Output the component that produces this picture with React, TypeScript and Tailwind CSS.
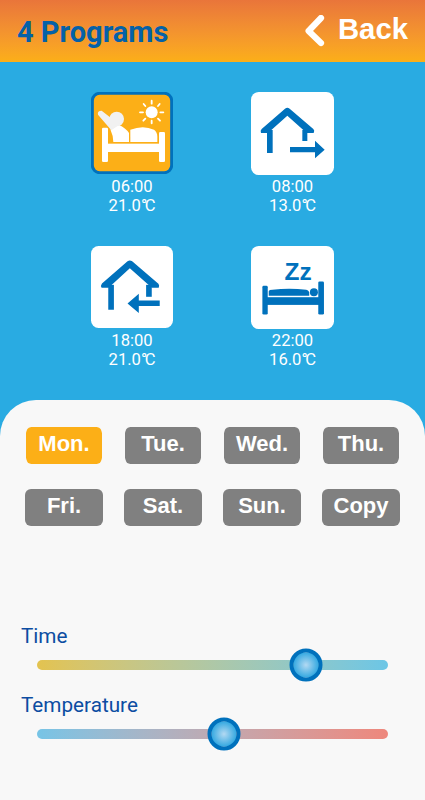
import React from 'react';
import clsx from 'clsx';

const MorningIcon = () => (
  <svg viewBox="33 36 246 246" className="w-[82px] h-[82px]">
    <rect x="37" y="40" width="238" height="238" rx="22" fill="#fcaf17" stroke="#0071bc" strokeWidth="9" />
    <g fill="#fff">
      <rect x="66" y="143" width="18" height="103" rx="4" />
      <rect x="237" y="156" width="18" height="90" rx="4" />
      <rect x="76" y="191" width="170" height="25" />
      <path d="M92 138L118 135Q138 145 147 159V186H100Q99 165 92 151Z" />
      <path d="M151 186V149Q190 134 222 149Q232 156 232 170V186Z" />
    </g>
    <g fill="#f1f1f1">
      <circle cx="110" cy="117" r="22" />
      <path d="M54 104Q51 92 65 92L93 114L120 133L94 151Z" />
    </g>
    <circle cx="215" cy="97" r="18" fill="#fff" />
    <path
      d="M215 62V71M215 122V130M180 97H189M241 97H250M191 72L196 78M234 116L240 122M239 72L234 78M196 116L190 122"
      stroke="#fff"
      strokeWidth="5.5"
      strokeLinecap="round"
    />
  </svg>
);

const LeaveIcon = () => (
  <svg viewBox="33 36 249 249" className="w-[83px] h-[83px]">
    <rect x="33" y="36" width="249" height="249" rx="23" fill="#fff" />
    <g fill="#0071bc">
      <path d="M135 86Q142 80 149 86L220 147Q225 152 221 159H200L142 107L84 159H63Q60 152 65 147Z" />
      <rect x="81" y="150" width="17" height="69" />
      <rect x="187" y="150" width="15" height="33" />
      <path d="M150 201H225V182L254 209L225 235V217H150Z" />
    </g>
  </svg>
);

const ReturnIcon = () => (
  <svg viewBox="33 33 247 247" className="w-[82px] h-[82px]">
    <rect x="33" y="33" width="247" height="247" rx="23" fill="#fff" />
    <g fill="#0071bc">
      <path d="M143 79Q150 74 157 79L236 147Q240 152 237 159H216L150 100L86 159H65Q61 152 66 146Z" />
      <rect x="85" y="150" width="17" height="75" />
      <rect x="199" y="150" width="17" height="36" />
      <path d="M240 197H177V177L143 206L177 235V214H240Z" />
    </g>
  </svg>
);

const SleepIcon = () => (
  <svg viewBox="34 33 248 248" className="w-[83px] h-[83px]">
    <rect x="34" y="33" width="248" height="248" rx="23" fill="#fff" />
    <g fill="#0071bc">
      <rect x="68" y="152" width="16" height="86" rx="4" />
      <rect x="235" y="139" width="17" height="99" rx="4" />
      <rect x="78" y="186" width="164" height="23" />
      <path d="M87 168Q88 164 98 164Q148 157 199 164Q208 166 208 174V182H87Z" />
      <circle cx="222" cy="171" r="12" />
    </g>
    <text x="134" y="136" fontFamily="Liberation Sans, sans-serif" fontWeight="700" fontSize="73" fill="#0071bc">
      Zz
    </text>
  </svg>
);

const programs = [
  { time: '06:00', temp: '21.0', icon: <MorningIcon /> },
  { time: '08:00', temp: '13.0', icon: <LeaveIcon /> },
  { time: '18:00', temp: '21.0', icon: <ReturnIcon /> },
  { time: '22:00', temp: '16.0', icon: <SleepIcon /> },
];

const weekRows = [
  ['Mon.', 'Tue.', 'Wed.', 'Thu.'],
  ['Fri.', 'Sat.', 'Sun.', 'Copy'],
];

interface SliderProps {
  label: string;
  value: number;
  trackClass: string;
}

function Slider({ label, value, trackClass }: SliderProps) {
  return (
    <div className="h-[69px]">
      <div className="pl-[21px] text-[20.7px] leading-[26px] text-[#0c4da2]">{label}</div>
      <div className={clsx('relative ml-[37px] mt-[11px] h-[10px] w-[351px] rounded-full', trackClass)}>
        <div
          className="absolute top-1/2 h-[33px] w-[33px] -translate-x-1/2 -translate-y-1/2 rounded-full border-4 border-[#0071bc] bg-[radial-gradient(circle_closest-side,#b3d9f2_0%,#35a9e1_100%)]"
          style={{ left: `${value}%` }}
        />
      </div>
    </div>
  );
}

export default function App() {
  return (
    <div className="flex h-[800px] w-[425px] flex-col overflow-hidden bg-[#29abe2] font-[Roboto,sans-serif]">
      <header className="flex h-[62px] shrink-0 justify-between bg-linear-to-b from-[#e9753a] to-[#fcaf17] pl-[17px] pr-[17px]">
        <h1 className="pt-[15px] text-[29px] leading-[34px] font-bold text-[#0461a8]">4 Programs</h1>
        <button className="flex items-start text-white">
          <svg viewBox="0 0 20 32" className="mt-[15px] mr-[13px] h-8 w-5" fill="none">
            <path d="M16 3L3.6 16L16 28" stroke="currentColor" strokeWidth="6.2" strokeLinecap="round" strokeLinejoin="round" />
          </svg>
          <span className="pt-[12px] font-['Liberation_Sans',sans-serif] text-[29.3px] leading-[34px] font-bold">Back</span>
        </button>
      </header>

      <section className="grid h-[338px] shrink-0 grid-cols-[160px_161px] grid-rows-[154px_154px] pt-[30px] pl-[52px]">
        {programs.map((p) => (
          <div key={p.time} className="flex flex-col items-center text-[16.6px] leading-[19px] text-white">
            <div className="mb-[2px] h-[83px]">{p.icon}</div>
            <span>{p.time}</span>
            <span>
              {p.temp}
              <span className="tracking-[-2.5px]">°</span>C
            </span>
          </div>
        ))}
      </section>

      <main className="flex-1 rounded-t-[36px] bg-[#f8f8f8] pt-[27px]">
        <div className="flex h-[183px] flex-col gap-[25px]">
          {weekRows.map((row, idx) => (
            <div key={row[0]} className="flex justify-center gap-[21px]">
              {row.map((day) => (
                <button
                  key={day}
                  className={clsx(
                    "flex h-[37px] w-[78px] justify-center rounded-[6px] pt-[4px] font-['Liberation_Sans',sans-serif] text-[22px] leading-[26px] font-bold text-white",
                    idx === 0 && 'border-x border-[#f8f8f8] bg-clip-padding',
                    day === 'Mon.' ? 'bg-[#fcaf17]' : 'bg-[#808080]'
                  )}
                >
                  {day}
                </button>
              ))}
            </div>
          ))}
        </div>
        <div className="pt-[13px]">
          <Slider label="Time" value={76.5} trackClass="bg-linear-to-r from-[#e3c34f] to-[#6cc6e6]" />
          <Slider label="Temperature" value={53.4} trackClass="bg-linear-to-r from-[#76c4e6] to-[#ee877c]" />
        </div>
      </main>
    </div>
  );
}
